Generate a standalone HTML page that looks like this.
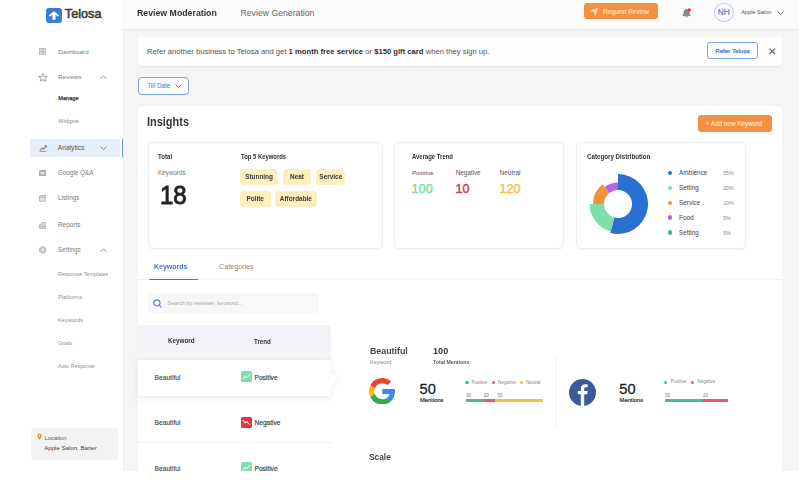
<!DOCTYPE html>
<html><head><meta charset="utf-8"><title>Telosa Insights</title>
<style>
html,body{margin:0;padding:0;width:800px;height:480px;overflow:hidden;background:#fff;font-family:"Liberation Sans",sans-serif}
.r{position:absolute}
.t{position:absolute;white-space:nowrap;line-height:20px}
b{font-weight:700}
</style></head><body>
<div class="r" style="left:122.5px;top:0px;width:677.50px;height:471.30px;background:#f5f5f5"></div>
<div class="r" style="left:122.5px;top:0px;width:677.50px;height:29.00px;background:#fbfbfb;box-shadow:0 0.8px 2px rgba(0,0,0,0.06)"></div>
<div class="r" style="left:0px;top:0px;width:122.50px;height:471.30px;background:#fff;box-shadow:0.5px 0 1.5px rgba(0,0,0,0.05)"></div>
<div class="r" style="left:46px;top:8px;width:16.00px;height:15.00px;background:#3a7bd5;border-radius:3px"></div>
<svg class="r" style="left:46px;top:8px;" width="16" height="15" viewBox="0 0 16 15"><path d="M8 3.3 L13.2 7.4 L11.9 8.6 L9.5 6.8 L9.5 11.8 L6.5 11.8 L6.5 6.8 L4.1 8.6 L2.8 7.4 Z" fill="#fff"/></svg>
<div class="t" style="left:64.8px;top:4.00px;font-size:12.6px;font-weight:400;color:#383838;-webkit-text-stroke:0.55px #383838;letter-spacing:0.05px">Telosa</div>
<div class="r" style="left:66px;top:20.8px;width:24.00px;height:1.00px;background:#e2e2e2"></div>
<svg class="r" style="left:38.7px;top:47.8px;" width="7.2" height="7.2" viewBox="0 0 7.2 7.2"><g fill="#e6e6e6" stroke="#b4b4b4" stroke-width="0.8"><rect x="0.4" y="0.4" width="2.8" height="2.8"/><rect x="4" y="0.4" width="2.8" height="2.8"/><rect x="0.4" y="4" width="2.8" height="2.8"/><rect x="4" y="4" width="2.8" height="2.8"/></g></svg>
<div class="t" style="left:58.3px;top:41.50px;font-size:6.2px;font-weight:400;color:#7a7a7a;">Dashboard</div>
<svg class="r" style="left:37.5px;top:72.5px;" width="10" height="9" viewBox="0 0 10 9"><path d="M5 0.6 L6.2 3.3 L9.2 3.5 L6.9 5.4 L7.6 8.3 L5 6.7 L2.4 8.3 L3.1 5.4 L0.8 3.5 L3.8 3.3 Z" fill="none" stroke="#8a8aa0" stroke-width="0.8"/></svg>
<div class="t" style="left:58.3px;top:67.20px;font-size:6.2px;font-weight:400;color:#7a7a7a;">Reviews</div>
<svg class="r" style="left:100px;top:75px;" width="7" height="4.4" viewBox="0 0 7 4.4"><path d="M0.6 3.8 L3.5 0.8 L6.4 3.8" fill="none" stroke="#999" stroke-width="1"/></svg>
<div class="t" style="left:58.3px;top:88.40px;font-size:5.6px;font-weight:400;color:#333;-webkit-text-stroke:0.25px #333">Manage</div>
<div class="t" style="left:58.3px;top:111.20px;font-size:5.7px;font-weight:400;color:#8a8a8a;">Widgets</div>
<div class="r" style="left:30px;top:138.7px;width:90.00px;height:18.60px;background:#e4eefb;border-radius:1px"></div>
<div class="r" style="left:121.6px;top:139px;width:1.40px;height:18.30px;background:#6a94d8"></div>
<svg class="r" style="left:38.5px;top:145px;" width="8" height="7" viewBox="0 0 8 7"><path d="M0.8 5.6 L3 3.2 L4.6 4.3 L7 1.4" fill="none" stroke="#808080" stroke-width="1.1"/><path d="M5.6 0.5 L7.6 0.5 L7.6 2.5 Z" fill="#808080" stroke="#808080" stroke-width="0.6"/><path d="M0.6 6.5 L7.5 6.5" stroke="#8a8a8a" stroke-width="0.8"/></svg>
<div class="t" style="left:57.8px;top:137.50px;font-size:6.65px;font-weight:400;color:#555;">Analytics</div>
<svg class="r" style="left:100px;top:145.6px;" width="7" height="4.4" viewBox="0 0 7 4.4"><path d="M0.6 0.6 L3.5 3.6 L6.4 0.6" fill="none" stroke="#8a8a8a" stroke-width="1"/></svg>
<svg class="r" style="left:38.8px;top:169.5px;" width="7.4" height="6.6" viewBox="0 0 7.4 6.6"><rect x="0.5" y="0.5" width="6.4" height="5.6" rx="0.8" fill="#b4b4b4" stroke="#9a9a9a" stroke-width="0.8"/><rect x="1.6" y="2" width="3.6" height="2.2" fill="#e4e4e4"/></svg>
<div class="t" style="left:58px;top:162.50px;font-size:6.3px;font-weight:400;color:#7a7a7a;">Google Q&amp;A</div>
<svg class="r" style="left:38.8px;top:195.2px;" width="7.4" height="6.8" viewBox="0 0 7.4 6.8"><rect x="0.5" y="0.5" width="6.4" height="5.8" rx="0.8" fill="#e2e2e2" stroke="#a8a8a8" stroke-width="0.8"/><path d="M0.5 2.2 L6.9 2.2" stroke="#a8a8a8" stroke-width="0.8"/></svg>
<div class="t" style="left:58px;top:188.30px;font-size:6.3px;font-weight:400;color:#7a7a7a;">Listings</div>
<svg class="r" style="left:38.8px;top:221.8px;" width="7.6" height="6.8" viewBox="0 0 7.6 6.8"><path d="M0.5 2.5 L0.5 6.3 L7.1 6.3 L7.1 0.6 L3 0.6 L3 2.5 Z" fill="#e0e0e0" stroke="#a8a8a8" stroke-width="0.8"/><path d="M0.5 4.3 L7.1 4.3" stroke="#a8a8a8" stroke-width="0.7"/></svg>
<div class="t" style="left:58px;top:214.50px;font-size:6.4px;font-weight:400;color:#7a7a7a;">Reports</div>
<svg class="r" style="left:38.8px;top:246.3px;" width="7.6" height="7.8" viewBox="0 0 7.6 7.8"><path d="M3.8 0.4 L7 2.2 L7 5.6 L3.8 7.4 L0.6 5.6 L0.6 2.2 Z" fill="#c8c8c8" stroke="#aaa" stroke-width="0.7"/><circle cx="3.8" cy="3.9" r="1.3" fill="#eee"/></svg>
<div class="t" style="left:58px;top:240.00px;font-size:6.3px;font-weight:400;color:#7a7a7a;">Settings</div>
<svg class="r" style="left:100px;top:248px;" width="7" height="4.4" viewBox="0 0 7 4.4"><path d="M0.6 3.8 L3.5 0.8 L6.4 3.8" fill="none" stroke="#999" stroke-width="1"/></svg>
<div class="t" style="left:58px;top:263.80px;font-size:5.4px;font-weight:400;color:#8f8f8f;">Response Templates</div>
<div class="t" style="left:58px;top:287.00px;font-size:5.75px;font-weight:400;color:#8f8f8f;">Platforms</div>
<div class="t" style="left:58px;top:310.00px;font-size:5.7px;font-weight:400;color:#8f8f8f;">Keywords</div>
<div class="t" style="left:58px;top:333.00px;font-size:5.3px;font-weight:400;color:#8f8f8f;">Goals</div>
<div class="t" style="left:58px;top:355.80px;font-size:5.4px;font-weight:400;color:#8f8f8f;">Auto Response</div>
<div class="r" style="left:30.8px;top:428.3px;width:86.90px;height:31.90px;background:#f3f3f3;border-radius:4px"></div>
<svg class="r" style="left:36.8px;top:433.3px;" width="5" height="7" viewBox="0 0 5 7"><path d="M2.5 6.8 C1 5 0.3 3.8 0.3 2.6 A2.2 2.2 0 0 1 4.7 2.6 C4.7 3.8 4 5 2.5 6.8 Z" fill="#f0922f"/><circle cx="2.5" cy="2.6" r="0.8" fill="#f2f2f2"/></svg>
<div class="t" style="left:44.6px;top:427.50px;font-size:5.8px;font-weight:400;color:#555;">Location</div>
<div class="t" style="left:44.2px;top:438.30px;font-size:6.1px;font-weight:400;color:#444;">Apple Salon, Baner</div>
<div class="t" style="left:136.7px;top:3.10px;font-size:9.1px;font-weight:700;color:#333;;transform:scaleX(0.963);transform-origin:0 50%">Review Moderation</div>
<div class="t" style="left:240.5px;top:3.10px;font-size:8.7px;font-weight:400;color:#666;">Review Generation</div>
<div class="r" style="left:583.5px;top:3px;width:74.70px;height:16.30px;background:#f3913e;border-radius:3px"></div>
<svg class="r" style="left:589.8px;top:7.3px;" width="9" height="9" viewBox="0 0 9 9"><path d="M0.3 4 L8.7 0.3 L5.2 8.7 L4.2 5 Z" fill="#fde8d4"/><path d="M4.2 5 L8.7 0.3" stroke="#f3913e" stroke-width="0.5"/></svg>
<div class="t" style="left:603px;top:2.10px;font-size:6.3px;font-weight:400;color:#fde6d0;-webkit-text-stroke:0.15px #fde6d0">Request Review</div>
<svg class="r" style="left:682px;top:8px;" width="10" height="10" viewBox="0 0 10 10"><path d="M1 7.6 L1 6.8 C1.9 6.2 2.1 5.3 2.1 4.2 C2.1 2.4 3.1 1.4 4.6 1.4 C6.1 1.4 7.1 2.4 7.1 4.2 C7.1 5.3 7.3 6.2 8.2 6.8 L8.2 7.6 Z" fill="#8a8a8a" stroke="#6a6a6a" stroke-width="0.6"/><path d="M3.6 8.3 C3.9 9.2 5.3 9.2 5.6 8.3" stroke="#777" stroke-width="0.9" fill="none"/><circle cx="7.3" cy="1.9" r="1.7" fill="#e0343f"/></svg>
<div class="r" style="left:714px;top:2.8px;width:19.60px;height:19.40px;border:0.8px solid #bccdee;border-radius:50%;box-sizing:border-box;background:#fbfcff"></div>
<div class="t" style="left:714px;top:2.8px;width:19.6px;line-height:19.4px;text-align:center;font-size:8.3px;color:#5080d0;-webkit-text-stroke:0.2px #5080d0">NH</div>
<div class="t" style="left:741.2px;top:2.20px;font-size:5.6px;font-weight:400;color:#555;">Apple Salon</div>
<svg class="r" style="left:776.5px;top:10.6px;" width="7" height="4.4" viewBox="0 0 7 4.4"><path d="M0.6 0.6 L3.5 3.5 L6.4 0.6" fill="none" stroke="#666" stroke-width="1"/></svg>
<div class="r" style="left:137.5px;top:37px;width:644.00px;height:29.00px;background:#fdfdfd;border-radius:2px;box-shadow:0 1px 2px rgba(0,0,0,0.07)"></div>
<div class="t" style="left:147px;top:42.00px;font-size:7.67px;font-weight:400;color:#555;">Refer another business to Telosa and get <b style="color:#2e2e2e">1 month free service</b> or <b style="color:#2e2e2e">$150 gift card</b> when they sign up.</div>
<div class="r" style="left:706.8px;top:41.7px;width:51.30px;height:17.20px;border:0.9px solid #7ea5de;border-radius:3px;box-sizing:border-box"></div>
<div class="t" style="left:715.2px;top:40.60px;font-size:6.2px;font-weight:400;color:#4f82d2;-webkit-text-stroke:0.25px #4f82d2">Refer Telosa</div>
<svg class="r" style="left:769.3px;top:48.4px;" width="6.6" height="6.6" viewBox="0 0 6.6 6.6"><path d="M0.6 0.6 L6 6 M6 0.6 L0.6 6" stroke="#606060" stroke-width="1.2"/></svg>
<div class="r" style="left:138.3px;top:77.2px;width:50.40px;height:17.80px;border:0.9px solid #78a0da;border-radius:4px;box-sizing:border-box;background:#fbfcff"></div>
<div class="t" style="left:147.2px;top:76.20px;font-size:6.4px;font-weight:400;color:#4f80cf;">Till Date</div>
<svg class="r" style="left:174.8px;top:84.3px;" width="7" height="4.5" viewBox="0 0 7 4.5"><path d="M0.6 0.6 L3.5 3.5 L6.4 0.6" fill="none" stroke="#4f80cf" stroke-width="0.9"/></svg>
<div class="r" style="left:137.5px;top:106px;width:644.50px;height:374.00px;background:#fff;border-radius:4px"></div>
<div class="t" style="left:147.3px;top:112.20px;font-size:12.6px;font-weight:700;color:#353535;;transform:scaleX(0.87);transform-origin:0 50%">Insights</div>
<div class="r" style="left:698px;top:115px;width:73.50px;height:16.60px;background:#f29142;border-radius:3px"></div>
<div class="t" style="left:705.5px;top:113.80px;font-size:6.4px;font-weight:400;color:#fde8d4;-webkit-text-stroke:0.12px #fde8d4">+ Add new Keyword</div>
<div class="r" style="left:148px;top:142px;width:235.00px;height:107.00px;border:0.8px solid #ededed;border-radius:5px;box-sizing:border-box;box-shadow:0 0.5px 1.5px rgba(0,0,0,0.04)"></div>
<div class="t" style="left:157.9px;top:147.20px;font-size:6.71px;font-weight:700;color:#333;;transform:scaleX(0.9091);transform-origin:0 50%">Total</div>
<div class="t" style="left:157.9px;top:163.10px;font-size:6.3px;font-weight:400;color:#777;">Keywords</div>
<div class="t" style="left:159.5px;top:185.00px;font-size:25px;font-weight:400;color:#222;-webkit-text-stroke:0.9px #222;transform:scaleX(0.96);transform-origin:0 50%">18</div>
<div class="t" style="left:240.6px;top:147.20px;font-size:6.49px;font-weight:700;color:#333;;transform:scaleX(0.9091);transform-origin:0 50%">Top 5 Keywords</div>
<div class="r" style="left:240.4px;top:169px;width:38.10px;height:16.00px;background:#fdefbe;border-radius:4px"></div>
<div class="t" style="left:240.4px;top:167.30px;width:38.10px;text-align:center;font-size:7.3px;font-weight:700;color:#383838;transform:scaleX(0.88)">Stunning</div>
<div class="r" style="left:282.5px;top:169px;width:28.10px;height:16.00px;background:#fdefbe;border-radius:4px"></div>
<div class="t" style="left:282.5px;top:167.30px;width:28.10px;text-align:center;font-size:7.3px;font-weight:700;color:#383838;transform:scaleX(0.88)">Neat</div>
<div class="r" style="left:315.9px;top:169px;width:29.60px;height:16.00px;background:#fdefbe;border-radius:4px"></div>
<div class="t" style="left:315.9px;top:167.30px;width:29.60px;text-align:center;font-size:7.3px;font-weight:700;color:#383838;transform:scaleX(0.88)">Service</div>
<div class="r" style="left:240.4px;top:190.6px;width:30.30px;height:16.30px;background:#fdefbe;border-radius:4px"></div>
<div class="t" style="left:240.4px;top:189.05px;width:30.30px;text-align:center;font-size:7.3px;font-weight:700;color:#383838;transform:scaleX(0.88)">Polite</div>
<div class="r" style="left:275.2px;top:190.6px;width:41.80px;height:16.30px;background:#fdefbe;border-radius:4px"></div>
<div class="t" style="left:275.2px;top:189.05px;width:41.80px;text-align:center;font-size:7.3px;font-weight:700;color:#383838;transform:scaleX(0.88)">Affordable</div>
<div class="r" style="left:393.5px;top:142px;width:170.50px;height:107.00px;border:0.8px solid #ededed;border-radius:5px;box-sizing:border-box;box-shadow:0 0.5px 1.5px rgba(0,0,0,0.04)"></div>
<div class="t" style="left:411.9px;top:147.30px;font-size:6.52px;font-weight:700;color:#333;;transform:scaleX(0.9091);transform-origin:0 50%">Average Trend</div>
<div class="t" style="left:411.9px;top:163.00px;font-size:6.25px;font-weight:400;color:#555;">Positive</div>
<div class="t" style="left:455.7px;top:163.00px;font-size:6.3px;font-weight:400;color:#555;">Negative</div>
<div class="t" style="left:499.5px;top:163.00px;font-size:6.5px;font-weight:400;color:#555;">Neutral</div>
<div class="t" style="left:411.5px;top:178.50px;font-size:12.8px;font-weight:400;color:#7edba4;-webkit-text-stroke:0.35px #7edba4">100</div>
<div class="t" style="left:455.6px;top:178.50px;font-size:12.6px;font-weight:400;color:#d43b4a;-webkit-text-stroke:0.45px #d43b4a">10</div>
<div class="t" style="left:499.4px;top:178.50px;font-size:12.8px;font-weight:400;color:#f4bd47;-webkit-text-stroke:0.35px #f4bd47">120</div>
<div class="r" style="left:576px;top:142px;width:170.00px;height:107.00px;border:0.8px solid #ededed;border-radius:5px;box-sizing:border-box;box-shadow:0 0.5px 1.5px rgba(0,0,0,0.04)"></div>
<div class="t" style="left:586.7px;top:146.90px;font-size:6.82px;font-weight:700;color:#333;;transform:scaleX(0.9091);transform-origin:0 50%">Category Distribution</div>
<svg class="r" style="left:588.3px;top:173.8px;" width="60" height="60" viewBox="0 0 60 60"><path d="M30.00 0.00 A30 30 0 1 1 22.24 58.98 L26.38 43.52 A14 14 0 1 0 30.00 16.00 Z" fill="#2a70d3"/><path d="M22.68 57.34 A28.3 28.3 0 0 1 1.70 30.00 L16.00 30.00 A14 14 0 0 0 26.38 43.52 Z" fill="#7ee0a8"/><path d="M5.00 30.00 A25 25 0 0 1 14.61 10.30 L21.38 18.97 A14 14 0 0 0 16.00 30.00 Z" fill="#f1913c"/><path d="M16.70 12.98 A21.6 21.6 0 0 1 30.00 8.40 L30.00 16.00 A14 14 0 0 0 21.38 18.97 Z" fill="#b562e8"/></svg>
<div class="r" style="left:667.8000000000001px;top:170.6px;width:4.60px;height:4.60px;background:#2a6fd3;border-radius:50%"></div>
<div class="t" style="left:679px;top:162.90px;font-size:6.4px;font-weight:400;color:#444;">Ambience</div>
<div class="t" style="left:723.2px;top:162.90px;font-size:5.2px;font-weight:400;color:#8a8a8a;">55%</div>
<div class="r" style="left:667.8000000000001px;top:185.7px;width:4.60px;height:4.60px;background:#7ee0a8;border-radius:50%"></div>
<div class="t" style="left:679px;top:178.00px;font-size:6.4px;font-weight:400;color:#444;">Setting</div>
<div class="t" style="left:723.2px;top:178.00px;font-size:5.2px;font-weight:400;color:#8a8a8a;">20%</div>
<div class="r" style="left:667.8000000000001px;top:200.5px;width:4.60px;height:4.60px;background:#f1913c;border-radius:50%"></div>
<div class="t" style="left:679px;top:192.80px;font-size:6.4px;font-weight:400;color:#444;">Service</div>
<div class="t" style="left:723.2px;top:192.80px;font-size:5.2px;font-weight:400;color:#8a8a8a;">10%</div>
<div class="r" style="left:667.8000000000001px;top:215.39999999999998px;width:4.60px;height:4.60px;background:#b562e8;border-radius:50%"></div>
<div class="t" style="left:679px;top:207.70px;font-size:6.4px;font-weight:400;color:#444;">Food</div>
<div class="t" style="left:723.2px;top:207.70px;font-size:5.2px;font-weight:400;color:#8a8a8a;">5%</div>
<div class="r" style="left:667.8000000000001px;top:230.29999999999998px;width:4.60px;height:4.60px;background:#4aae98;border-radius:50%"></div>
<div class="t" style="left:679px;top:222.60px;font-size:6.4px;font-weight:400;color:#444;">Setting</div>
<div class="t" style="left:723.2px;top:222.60px;font-size:5.2px;font-weight:400;color:#8a8a8a;">5%</div>
<div class="t" style="left:154.4px;top:257.00px;font-size:7.7px;font-weight:700;color:#3b78d0;;transform:scaleX(0.9091);transform-origin:0 50%">Keywords</div>
<div class="t" style="left:219.1px;top:257.00px;font-size:7.15px;font-weight:400;color:#8a8a8a;">Categories</div>
<div class="r" style="left:137.5px;top:279px;width:644.50px;height:1.00px;background:#f0f0f0"></div>
<div class="r" style="left:148.9px;top:278.8px;width:49.10px;height:1.60px;background:#3b78d0;border-radius:1px"></div>
<div class="r" style="left:148px;top:292.6px;width:171.20px;height:20.00px;background:#f7f7f7;border-radius:4px"></div>
<svg class="r" style="left:152.5px;top:298.5px;" width="9" height="9" viewBox="0 0 9 9"><circle cx="3.9" cy="3.9" r="3.1" fill="none" stroke="#4f80cf" stroke-width="1.2"/><path d="M6.1 6.1 L8.3 8.3" stroke="#4f80cf" stroke-width="1.2"/></svg>
<div class="t" style="left:167.3px;top:292.80px;font-size:5.5px;font-weight:400;color:#aaa;">Search by reviewer, keyword...</div>
<div class="r" style="left:138px;top:325px;width:193.30px;height:36.00px;background:linear-gradient(#f2f3f8 0%,#f3f4f8 70%,#f6f6f8 85%,#f0f0f2 100%)"></div>
<div class="t" style="left:167.5px;top:331.30px;font-size:6.93px;font-weight:700;color:#333;;transform:scaleX(0.9091);transform-origin:0 50%">Keyword</div>
<div class="t" style="left:253.8px;top:331.50px;font-size:6.8px;font-weight:700;color:#333;;transform:scaleX(0.9);transform-origin:0 50%">Trend</div>
<div class="r" style="left:138px;top:360px;width:193.30px;height:36.30px;background:#fff;box-shadow:0 2px 6px rgba(0,0,0,0.09)"></div>
<svg class="r" style="left:329.8px;top:370.5px;overflow:visible" width="10" height="16" viewBox="0 0 10 16"><path d="M0 0.5 L1 0.5 L8.8 8 L1 15.5 L0 15.5 Z" fill="#fff" style="filter:drop-shadow(1px 0.5px 1.5px rgba(0,0,0,0.08))"/></svg>
<div class="t" style="left:154.5px;top:367.50px;font-size:6.7px;font-weight:400;color:#383838;-webkit-text-stroke:0.08px #383838">Beautiful</div>
<svg class="r" style="left:240.75px;top:371.25px;" width="11" height="11" viewBox="0 0 11 11"><rect x="0" y="0" width="11" height="11" rx="1.5" fill="#80dfa9"/><path d="M1.8 8 L4.2 5.4 L6 6.6 L9.2 3.2" fill="none" stroke="#fff" stroke-opacity="0.9" stroke-width="1.1"/></svg>
<div class="t" style="left:254.5px;top:367.50px;font-size:6.6px;font-weight:400;color:#3a3a3a;-webkit-text-stroke:0.15px #3a3a3a">Positive</div>
<div class="t" style="left:154.5px;top:412.70px;font-size:6.7px;font-weight:400;color:#383838;-webkit-text-stroke:0.08px #383838">Beautiful</div>
<svg class="r" style="left:240.75px;top:416.7px;" width="11" height="11" viewBox="0 0 11 11"><rect x="0" y="0" width="11" height="11" rx="1.5" fill="#dc3545"/><path d="M1.8 3.2 L4.2 5.8 L6 4.6 L9 8" fill="none" stroke="#fff" stroke-opacity="0.9" stroke-width="1.1"/></svg>
<div class="t" style="left:254.5px;top:412.70px;font-size:6.6px;font-weight:400;color:#3a3a3a;-webkit-text-stroke:0.15px #3a3a3a">Negative</div>
<div class="r" style="left:138px;top:442.2px;width:194.00px;height:0.80px;background:#f0f0f0"></div>
<div class="t" style="left:154.5px;top:458.70px;font-size:6.7px;font-weight:400;color:#383838;-webkit-text-stroke:0.08px #383838">Beautiful</div>
<svg class="r" style="left:240.75px;top:462px;" width="11" height="11" viewBox="0 0 11 11"><rect x="0" y="0" width="11" height="11" rx="1.5" fill="#80dfa9"/><path d="M1.8 8 L4.2 5.4 L6 6.6 L9.2 3.2" fill="none" stroke="#fff" stroke-opacity="0.9" stroke-width="1.1"/></svg>
<div class="t" style="left:254.5px;top:458.70px;font-size:6.6px;font-weight:400;color:#3a3a3a;-webkit-text-stroke:0.15px #3a3a3a">Positive</div>
<div class="t" style="left:369.5px;top:340.60px;font-size:9.8px;font-weight:700;color:#454545;;transform:scaleX(0.9);transform-origin:0 50%">Beautiful</div>
<div class="t" style="left:369.7px;top:351.70px;font-size:5.6px;font-weight:400;color:#888;">Keyword</div>
<div class="t" style="left:432.6px;top:340.60px;font-size:9.6px;font-weight:700;color:#333;;transform:scaleX(0.95);transform-origin:0 50%">100</div>
<div class="t" style="left:432.6px;top:351.70px;font-size:5.72px;font-weight:700;color:#555;;transform:scaleX(0.9091);transform-origin:0 50%">Total Mentions</div>
<svg class="r" style="left:369.4px;top:377.8px;" width="26.5" height="26.5" viewBox="0 0 48 48"><path fill="#EA4335" d="M24 9.5c3.54 0 6.71 1.22 9.21 3.6l6.85-6.85C35.9 2.38 30.47 0 24 0 14.62 0 6.51 5.38 2.56 13.22l7.98 6.19C12.43 13.72 17.74 9.5 24 9.5z"/><path fill="#4285F4" d="M46.98 24.55c0-1.57-.15-3.09-.38-4.55H24v9.02h12.94c-.58 2.960-2.26 5.48-4.78 7.18l7.73 6c4.51-4.18 7.09-10.36 7.09-17.65z"/><path fill="#FBBC05" d="M10.53 28.59c-.48-1.45-.76-2.990-.76-4.59s.27-3.14.76-4.59l-7.98-6.19C.92 16.46 0 20.12 0 24c0 3.880.92 7.54 2.56 10.78l7.97-6.19z"/><path fill="#34A853" d="M24 48c6.48 0 11.93-2.13 15.89-5.81l-7.73-6c-2.15 1.45-4.92 2.3-8.16 2.3-6.26 0-11.57-4.22-13.47-9.91l-7.98 6.19C6.51 42.62 14.62 48 24 48z"/></svg>
<div class="t" style="left:419.6px;top:379.00px;font-size:14.6px;font-weight:400;color:#222;-webkit-text-stroke:0.3px #222">50</div>
<div class="t" style="left:420px;top:389.50px;font-size:5.8px;font-weight:400;color:#333;-webkit-text-stroke:0.2px #333">Mentions</div>
<div class="r" style="left:465.4px;top:381.2px;width:3.20px;height:3.20px;background:#4cb99a;border-radius:50%"></div>
<div class="t" style="left:471.6px;top:372.80px;font-size:4.5px;font-weight:400;color:#888;">Positive</div>
<div class="r" style="left:491.7px;top:381.2px;width:3.20px;height:3.20px;background:#e15b64;border-radius:50%"></div>
<div class="t" style="left:497.90000000000003px;top:372.80px;font-size:4.5px;font-weight:400;color:#888;">Negative</div>
<div class="r" style="left:519.6999999999999px;top:381.2px;width:3.20px;height:3.20px;background:#f4bf4f;border-radius:50%"></div>
<div class="t" style="left:525.9px;top:372.80px;font-size:4.5px;font-weight:400;color:#888;">Neutral</div>
<div class="r" style="left:465.5px;top:399.3px;width:18.30px;height:2.70px;background:#4cb99a"></div>
<div class="r" style="left:483.8px;top:399.3px;width:11.20px;height:2.70px;background:#e15b64"></div>
<div class="r" style="left:495px;top:399.3px;width:48.00px;height:2.70px;background:#f4bf4f"></div>
<div class="t" style="left:466px;top:386.20px;font-size:4.5px;font-weight:400;color:#777;">30</div>
<div class="t" style="left:483.8px;top:386.20px;font-size:4.5px;font-weight:400;color:#777;">20</div>
<div class="t" style="left:497.5px;top:386.20px;font-size:4.5px;font-weight:400;color:#777;">50</div>
<div class="r" style="left:554.8px;top:356px;width:0.80px;height:72.00px;background:#f2f2f2"></div>
<svg class="r" style="left:568.5px;top:378.5px;" width="27" height="27" viewBox="0 0 27 27"><defs><clipPath id="fbc"><circle cx="13.5" cy="13.5" r="13.5"/></clipPath></defs><circle cx="13.5" cy="13.5" r="13.5" fill="#3b5a9a"/><path clip-path="url(#fbc)" d="M15.2 28 L15.2 15.2 L18.3 15.2 L18.7 12 L15.2 12 L15.2 10 C15.2 9 15.5 8.3 16.9 8.3 L18.8 8.3 L18.8 5.5 C18.4 5.4 17.4 5.3 16.2 5.3 C13.6 5.3 11.8 6.9 11.8 9.7 L11.8 12 L8.8 12 L8.8 15.2 L11.8 15.2 L11.8 28 Z" fill="#fff"/></svg>
<div class="t" style="left:619.3px;top:379.00px;font-size:14.6px;font-weight:400;color:#222;-webkit-text-stroke:0.3px #222">50</div>
<div class="t" style="left:619.6px;top:389.50px;font-size:5.8px;font-weight:400;color:#333;-webkit-text-stroke:0.2px #333">Mentions</div>
<div class="r" style="left:664.1999999999999px;top:380.59999999999997px;width:3.20px;height:3.20px;background:#4cb99a;border-radius:50%"></div>
<div class="t" style="left:670.5999999999999px;top:372.20px;font-size:4.5px;font-weight:400;color:#888;">Positive</div>
<div class="r" style="left:691.1px;top:380.59999999999997px;width:3.20px;height:3.20px;background:#e15b64;border-radius:50%"></div>
<div class="t" style="left:697.5px;top:372.20px;font-size:4.5px;font-weight:400;color:#888;">Negative</div>
<div class="r" style="left:664.5px;top:399px;width:38.60px;height:2.70px;background:#4cb99a"></div>
<div class="r" style="left:703.1px;top:399px;width:24.70px;height:2.70px;background:#e15b64"></div>
<div class="t" style="left:665px;top:386.00px;font-size:4.5px;font-weight:400;color:#777;">30</div>
<div class="t" style="left:703px;top:386.00px;font-size:4.5px;font-weight:400;color:#777;">20</div>
<div class="t" style="left:369.2px;top:446.60px;font-size:9.8px;font-weight:700;color:#454545;;transform:scaleX(0.85);transform-origin:0 50%">Scale</div>
<div class="r" style="left:0px;top:471.3px;width:800.00px;height:8.70px;background:#fff"></div>
<div class="r" style="left:798.7px;top:0px;width:1.30px;height:480.00px;background:#fff"></div>
</body></html>
